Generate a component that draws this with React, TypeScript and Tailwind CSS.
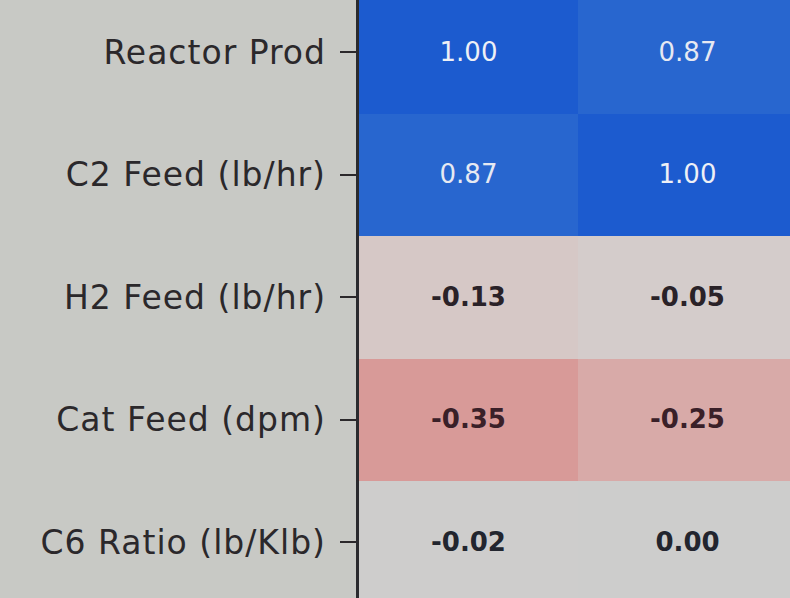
import React from 'react';

interface Row {
  label: string;
  cells: { value: string; bg: string; text: string }[];
}

const rows: Row[] = [
  {
    label: 'Reactor Prod',
    cells: [
      { value: '1.00', bg: 'bg-[#1c5bcf]', text: 'text-[#eef0f6] font-medium' },
      { value: '0.87', bg: 'bg-[#2866cf]', text: 'text-[#e6e9f2] font-medium' },
    ],
  },
  {
    label: 'C2 Feed (lb/hr)',
    cells: [
      { value: '0.87', bg: 'bg-[#2866cf]', text: 'text-[#e6e9f2] font-medium' },
      { value: '1.00', bg: 'bg-[#1c5bcf]', text: 'text-[#eef0f6] font-medium' },
    ],
  },
  {
    label: 'H2 Feed (lb/hr)',
    cells: [
      { value: '-0.13', bg: 'bg-[#d6c8c6]', text: 'text-[#2a2228] font-bold' },
      { value: '-0.05', bg: 'bg-[#d4cccb]', text: 'text-[#2a2228] font-bold' },
    ],
  },
  {
    label: 'Cat Feed (dpm)',
    cells: [
      { value: '-0.35', bg: 'bg-[#d89a98]', text: 'text-[#3a2028] font-bold' },
      { value: '-0.25', bg: 'bg-[#d8aaa8]', text: 'text-[#3a2028] font-bold' },
    ],
  },
  {
    label: 'C6 Ratio (lb/Klb)',
    cells: [
      { value: '-0.02', bg: 'bg-[#cecdcc]', text: 'text-[#22252e] font-bold' },
      { value: '0.00', bg: 'bg-[#cdcdcc]', text: 'text-[#22252e] font-bold' },
    ],
  },
];

const App = () => {
  return (
    <div
      className="w-[790px] h-[598px] overflow-hidden flex bg-[#c8c9c5]"
      style={{ fontFamily: '"DejaVu Sans", Verdana, sans-serif' }}
    >
      <div className="w-[356px] shrink-0 flex flex-col -mt-[9px]">
        {rows.map((row) => (
          <div key={row.label} className="h-[122.5px] shrink-0 flex items-center justify-end">
            <span className="text-[33px] text-[#2b282b] tracking-[1px] whitespace-nowrap">
              {row.label}
            </span>
            <span className="ml-[14px] w-[16px] h-[2px] bg-[#2b282b]" />
          </div>
        ))}
      </div>
      <div className="w-[3px] shrink-0 bg-[#2a2a2e]" />
      <div className="flex-1 flex flex-col -mt-[9px]">
        {rows.map((row) => (
          <div key={row.label} className="h-[122.5px] shrink-0 flex">
            {row.cells.map((cell, i) => (
              <div
                key={i}
                className={`w-[219px] shrink-0 flex items-center justify-center ${cell.bg}`}
              >
                <span className={`text-[26px] ${cell.text}`}>{cell.value}</span>
              </div>
            ))}
          </div>
        ))}
      </div>
    </div>
  );
};

export default App;
